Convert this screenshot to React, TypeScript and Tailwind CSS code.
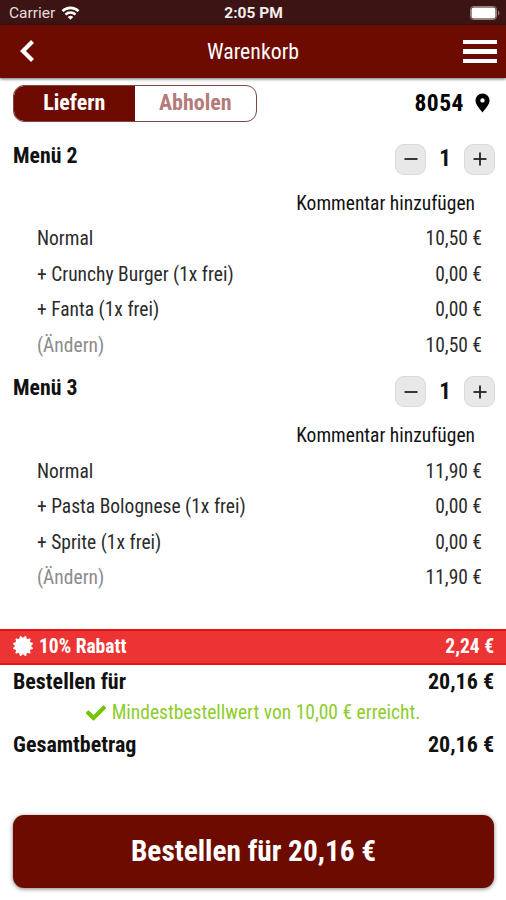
import React from 'react';
import { FaCertificate, FaCheck } from 'react-icons/fa';

type Line = { label: string; price: string; muted?: boolean };

const menus: { title: string; lines: Line[] }[] = [
  {
    title: 'Menü 2',
    lines: [
      { label: 'Normal', price: '10,50 €' },
      { label: '+ Crunchy Burger (1x frei)', price: '0,00 €' },
      { label: '+ Fanta (1x frei)', price: '0,00 €' },
      { label: '(Ändern)', price: '10,50 €', muted: true },
    ],
  },
  {
    title: 'Menü 3',
    lines: [
      { label: 'Normal', price: '11,90 €' },
      { label: '+ Pasta Bolognese (1x frei)', price: '0,00 €' },
      { label: '+ Sprite (1x frei)', price: '0,00 €' },
      { label: '(Ändern)', price: '11,90 €', muted: true },
    ],
  },
];

const StatusBar: React.FC = () => (
  <div className="grid h-[25px] grid-cols-3 items-center bg-[#3b1413] pl-[9px] pr-1.5 pt-0.5 font-[Roboto,sans-serif] text-[15.5px] text-[#e6dede] [font-stretch:100%]">
    <div className="flex items-center gap-1.5">
      <span>Carrier</span>
      <svg className="-mt-0.5" width="19" height="14" viewBox="0 0 18 14" fill="none" stroke="#fff" strokeWidth="2.6">
        <path d="M1 5.2a11.3 11.3 0 0 1 16 0" />
        <path d="M4 8.6a7 7 0 0 1 10 0" />
        <path d="M9 13.8 6.2 11a4 4 0 0 1 5.6 0Z" fill="#fff" stroke="none" />
      </svg>
    </div>
    <span className="-ml-0.5 text-center font-bold text-[#f3eeee]">2:05 PM</span>
    <svg className="-mt-0.5 justify-self-end" width="30" height="14" viewBox="0 0 30 14">
      <rect x="0.5" y="0.5" width="26" height="13" rx="3" fill="none" stroke="#9a8281" />
      <rect x="1.5" y="1.5" width="24" height="11" rx="2" fill="#fff" />
      <path d="M28 4.5c2 .8 2 4.2 0 5Z" fill="#8d7473" />
    </svg>
  </div>
);

const Header: React.FC = () => (
  <header className="grid h-[53px] grid-cols-[1fr_auto_1fr] items-center bg-[#6d0b00] pl-5 pr-[9px] text-white shadow-[0_1px_3px_rgba(0,0,0,0.6)]">
    <svg className="-mt-px" width="15" height="24" viewBox="0 0 15 24" fill="none" stroke="currentColor" strokeWidth="4.2">
      <path d="M12.5 2.5 3 12l9.5 9.5" />
    </svg>
    <h1 className="-ml-[11px] pt-px text-[21.8px]">Warenkorb</h1>
    <div className="flex flex-col gap-[5px] justify-self-end">
      <span className="h-[4.5px] w-[34px] bg-white" />
      <span className="h-[4.5px] w-[34px] bg-white" />
      <span className="h-[4.5px] w-[34px] bg-white" />
    </div>
  </header>
);

const StepButton: React.FC<{ plus?: boolean }> = ({ plus }) => (
  <button className="flex size-[31px] items-center justify-center rounded-[9px] border border-[#dadada] bg-[#e8e8e8]">
    <svg width="14" height="14" viewBox="0 0 14 14" stroke="#222" strokeWidth="1.8">
      <path d="M0.5 7h13" />
      {plus && <path d="M7 0.5v13" />}
    </svg>
  </button>
);

const App: React.FC = () => {
  return (
    <div className="flex h-[900px] w-[506px] flex-col overflow-hidden bg-white font-['Roboto_Condensed',Roboto,sans-serif] text-[#111] [font-stretch:75%]">
      <StatusBar />
      <Header />

      <div className="flex h-[60.5px] items-start justify-between pl-[13px] pr-4 pt-[7px]">
        <div className="flex h-[37px] w-[244px] overflow-hidden rounded-[11px] border border-[#7d4744] text-[22px] font-bold">
          <button className="w-[120.5px] bg-[#6d0b00] pb-0.5 text-white">Liefern</button>
          <button className="flex-1 pb-0.5 text-[#b57b79]">Abholen</button>
        </div>
        <div className="flex h-[37px] items-center gap-[11px] text-[23.5px] font-bold text-black">
          <span className="tracking-[0.5px]">8054</span>
          <svg className="-mt-0.5" width="15" height="20" viewBox="0 0 15 20" fill="currentColor" fillRule="evenodd">
            <path d="M7.5 .5A7 7 0 0 0 .5 7.5c0 4 3.500 7.500 7 12 3.500-4.500 7-8 7-12a7 7 0 0 0-7-7Zm0 4.700a2.200 2.200 0 1 1 0 4.400 2.200 2.200 0 0 1 0-4.400Z" />
          </svg>
        </div>
      </div>

      {menus.map((menu) => (
        <section key={menu.title} className="h-[232.5px]">
          <div className="flex h-[47px] items-start justify-between pl-[13px] pr-[11px]">
            <h2 className="pt-px text-[21.8px] font-bold">{menu.title}</h2>
            <div className="flex items-center gap-[13px] pt-[3.5px]">
              <StepButton />
              <span className="w-[12px] text-center text-[23px] font-bold">1</span>
              <StepButton plus />
            </div>
          </div>
          <div className="flex h-[35.5px] items-center justify-end pr-[31px] text-[19.5px]">
            Kommentar hinzufügen
          </div>
          {menu.lines.map((line) => (
            <div key={line.label} className="flex h-[35.5px] items-center justify-between pl-[37px] pr-6 text-[19.5px]">
              <span className={line.muted ? 'text-[#8a8a8a]' : 'text-[#2b2b2b]'}>{line.label}</span>
              <span className="text-[#2b2b2b]">{line.price}</span>
            </div>
          ))}
        </section>
      ))}

      <div className="mt-[25.5px] flex h-9 items-center justify-between border-y-2 border-[#e41414] bg-[#ed3434] pl-[13px] pr-3 text-[19.5px] font-bold text-white">
        <div className="flex items-center gap-1.5">
          <FaCertificate className="-mt-0.5 size-5" />
          <span>10% Rabatt</span>
        </div>
        <span>2,24 €</span>
      </div>
      <div className="flex h-[33px] items-center justify-between pl-[13px] pr-3 text-[22px] font-bold">
        <span>Bestellen für</span>
        <span>20,16 €</span>
      </div>
      <div className="flex h-[30px] items-center justify-center gap-1.5 text-[19.5px] text-[#8ccd2b]">
        <FaCheck className="size-5 text-[#74c400]" />
        <span>Mindestbestellwert von 10,00 € erreicht.</span>
      </div>
      <div className="flex h-[32px] items-center justify-between pl-[13px] pr-3 text-[22px] font-bold">
        <span>Gesamtbetrag</span>
        <span>20,16 €</span>
      </div>

      <button className="ml-[13px] mr-3 mt-[55px] h-[73px] rounded-[11px] bg-[#6d0b00] text-[29.3px] font-bold text-white shadow-[0_1px_4px_rgba(0,0,0,0.5)]">
        Bestellen für 20,16 €
      </button>
    </div>
  );
};

export default App;
